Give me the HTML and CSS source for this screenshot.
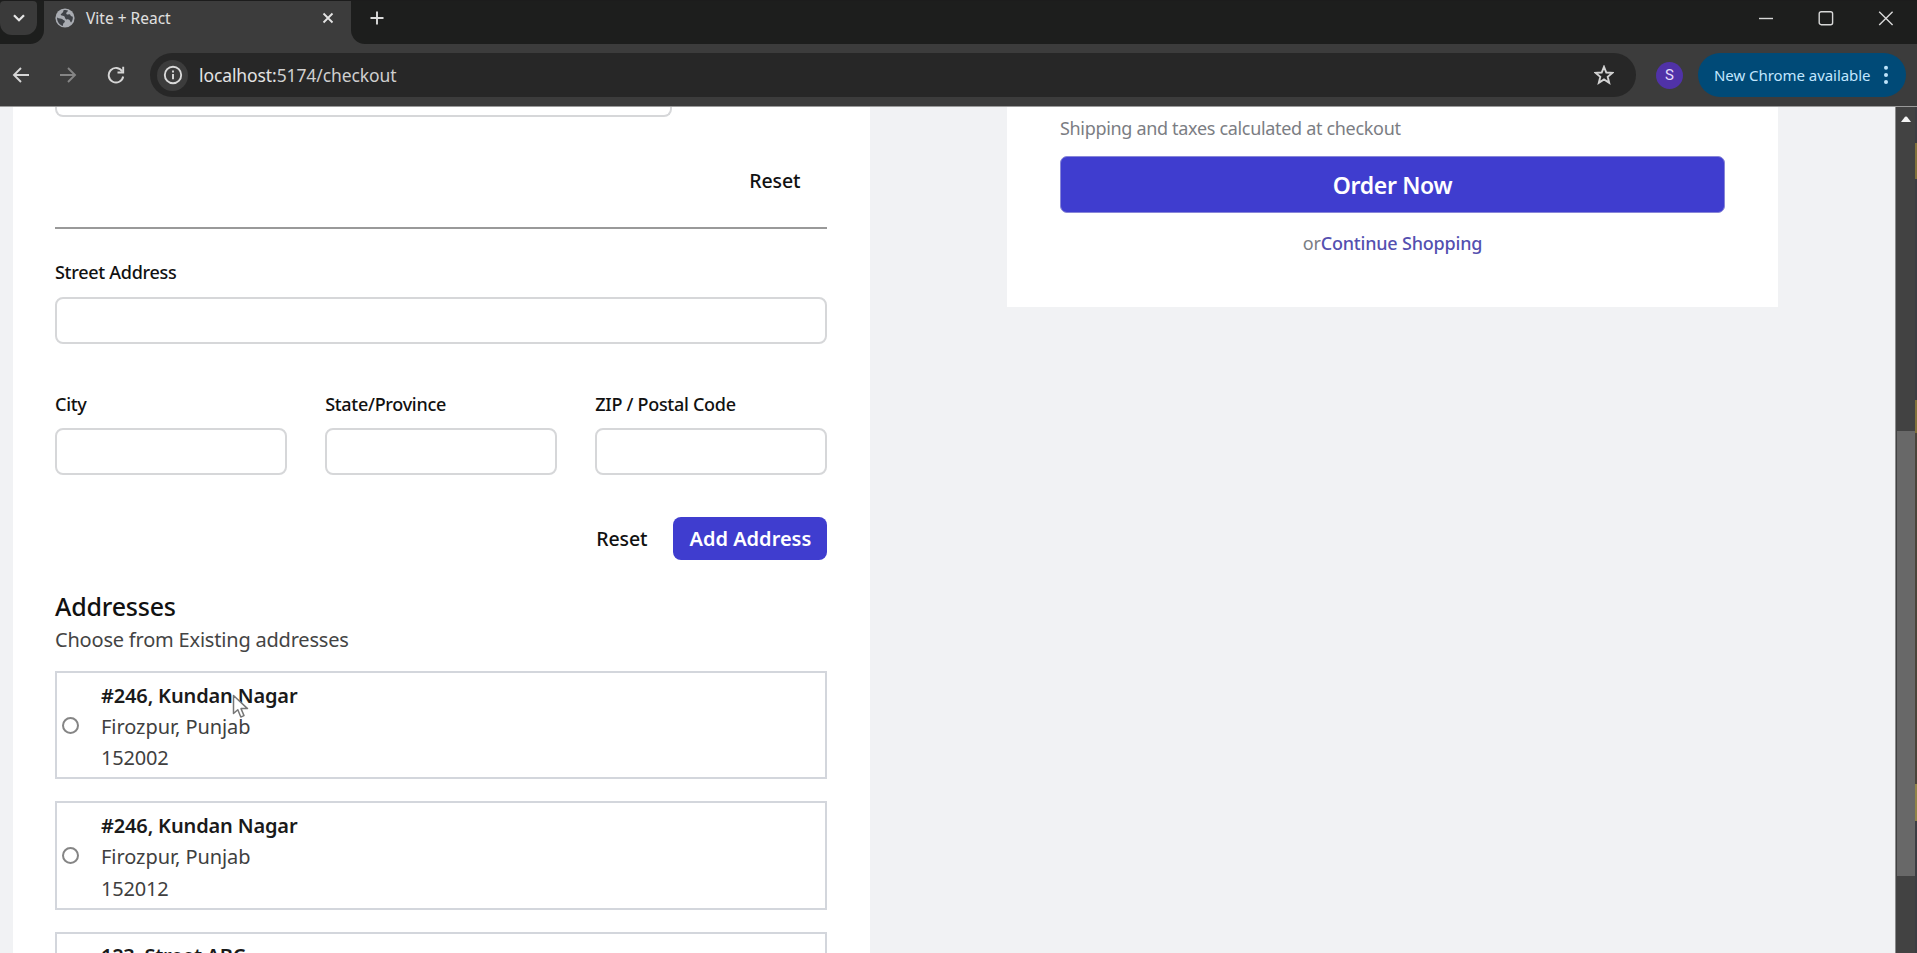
FILE: index.html
```html
<!DOCTYPE html>
<html lang="en">
<head>
<meta charset="utf-8">
<title>Vite + React</title>
<link rel="stylesheet" href="styles.css">
</head>
<body>
<div class="browser">
  <header class="tabstrip">
    <div class="tab-left"><span class="tab-search"><svg width="14" height="10" viewBox="0 0 14 10"><path d="M2 2.2 7 7.2 12 2.2" fill="none" stroke="#e6e6e6" stroke-width="2.3"/></svg></span></div>
    <div class="tab">
      <svg class="globe" width="20" height="20" viewBox="0 0 20 20"><circle cx="10" cy="10" r="9.6" fill="#a9acb2"/><path d="M2 9.5c2 1.300 4.300.5 5.500 1.800 1 1.200 2.500.9 2.400 2.300-.1 1.200-1.500 1.200-1.800 2.700l-.3 1.700C4.500 17 2 13.500 2 9.500ZM8.500 2.200c1.800-.5 3.500-.2 4.500.3-.1 1.500-1.200 1.300-1.700 2.400-.4 1 .7 1.800 1.900 1.500 1.300-.4 2-.2 2.300.8.4 1.100 1.500 1.200 2.300 1.600.3 2.200-.4 4.200-1.700 5.700-1-.5-.7-2-1.800-2.700-1.100-.6-2.600.1-3.600-.8-1-1-.7-2.600-1.900-3.100-1.200-.6-2.600.1-3-.9-.5-1.400 2.500-1.600 2.700-4.800Z" fill="#3f4247"/></svg>
      <span class="t tab-title">Vite + React</span>
      <svg class="tab-x" width="12" height="12" viewBox="0 0 12 12"><path d="M1.500 1.500 10.500 10.500M10.500 1.500 1.500 10.500" stroke="#e4e4e4" stroke-width="1.800"/></svg>
    </div>
    <div class="tab-right">
      <svg class="plus" width="14" height="14" viewBox="0 0 14 14"><path d="M7 .5V13.500M.5 7H13.500" stroke="#dcdcdc" stroke-width="1.900"/></svg>
      <div class="winbtns">
        <svg width="16" height="16" viewBox="0 0 16 16"><path d="M1 8.500H15" stroke="#d8d8d8" stroke-width="1.400"/></svg>
        <svg width="16" height="16" viewBox="0 0 16 16"><rect x="1.200" y="1.700" width="13.400" height="13" rx="2" fill="none" stroke="#d8d8d8" stroke-width="1.400"/></svg>
        <svg width="16" height="16" viewBox="0 0 16 16"><path d="M1.200 1.700 14.600 15.100M14.600 1.700 1.200 15.100" stroke="#d8d8d8" stroke-width="1.400"/></svg>
      </div>
    </div>
  </header>
  <div class="toolbar">
    <svg class="nav back" width="18" height="18" viewBox="0 0 18 18"><path d="M17 9H2.500M9 2 2 9l7 7" fill="none" stroke="#d6d6d6" stroke-width="1.900"/></svg>
    <svg class="nav fwd" width="18" height="18" viewBox="0 0 18 18"><path d="M1 9h14.500M9 2l7 7-7 7" fill="none" stroke="#858585" stroke-width="1.900"/></svg>
    <svg class="nav reload" width="18" height="18" viewBox="0 0 18 18"><path d="M15.300 5.500A7.300 7.300 0 1 0 16.200 10.500" fill="none" stroke="#d6d6d6" stroke-width="1.900"/><path d="M16.200.8V6.500H10.500" fill="none" stroke="#d6d6d6" stroke-width="1.900"/></svg>
    <div class="omnibox">
      <span class="info"><svg width="20" height="20" viewBox="0 0 20 20"><circle cx="10" cy="10" r="8.200" fill="none" stroke="#d9d9d9" stroke-width="1.900"/><path d="M10 9v5.200M10 5.600v2" stroke="#d9d9d9" stroke-width="1.900"/></svg></span>
      <span class="t url">localhost:<span class="path">5174/checkout</span></span>
      <svg class="star" width="20" height="20" viewBox="0 0 20 20"><path d="M10 1.800 12.300 7.500 18.300 7.900 13.700 11.800 15.200 17.800 10 14.500 4.800 17.800 6.300 11.800 1.700 7.900 7.700 7.500Z" fill="none" stroke="#d2d2d2" stroke-width="1.900"/></svg>
    </div>
    <span class="avatar">S</span>
    <div class="update"><span class="t update-text">New Chrome available</span><svg width="6" height="20" viewBox="0 0 6 20"><g fill="#bfe4fb"><circle cx="3" cy="2.800" r="2"/><circle cx="3" cy="10" r="2"/><circle cx="3" cy="17" r="2"/></g></svg></div>
  </div>
  <div class="viewport">
    <main class="page">
      <section class="form-card">
        <div class="input cut"></div>
        <div class="actions first"><span class="t reset">Reset</span></div>
        <hr class="rule">
        <div class="field"><label class="t label">Street Address</label><div class="input"></div></div>
        <div class="grid3">
          <div class="field"><label class="t label">City</label><div class="input"></div></div>
          <div class="field"><label class="t label">State/Province</label><div class="input"></div></div>
          <div class="field"><label class="t label">ZIP / Postal Code</label><div class="input"></div></div>
        </div>
        <div class="actions second"><span class="t reset">Reset</span><button class="add"><span class="t add-text">Add Address</span></button></div>
        <h2 class="heading">Addresses</h2>
        <p class="sub">Choose from Existing addresses</p>
        <ul class="list">
          <li class="addr"><i class="radio"></i><div class="lines"><p class="name">#246, Kundan Nagar</p><p>Firozpur, Punjab</p><p class="pin">152002</p></div></li>
          <li class="addr"><i class="radio"></i><div class="lines"><p class="name">#246, Kundan Nagar</p><p>Firozpur, Punjab</p><p class="pin">152012</p></div></li>
          <li class="addr"><i class="radio"></i><div class="lines"><p class="name street">123, Street ABC</p></div></li>
        </ul>
      </section>
      <aside class="summary">
        <p class="ship">Shipping and taxes calculated at checkout</p>
        <button class="order">Order Now</button>
        <p class="cont">or<a class="link">Continue Shopping</a></p>
      </aside>
    </main>
    <div class="scrollbar"><svg width="10" height="6" viewBox="0 0 10 6"><path d="M0 6 4 .8Q5 0 6 .8L10 6Z" fill="#f4f4f4"/></svg><div class="thumb"></div></div>
    <div class="edge"></div>
  </div>
  <svg class="cursor" width="18" height="26" viewBox="0 0 18 26"><path d="M1.500 1.500V19.500L5.800 15.800 8.800 23 12 21.600 9 14.600H15.500Z" fill="#fff" stroke="#777" stroke-width="1.500" stroke-linejoin="round"/></svg>
</div>
</body>
</html>
```
FILE: styles.css
```css
* { box-sizing: border-box; margin: 0; padding: 0; }
body { width: 1917px; height: 953px; overflow: hidden; font-family: "Noto Sans", "Open Sans", sans-serif; color: #111; background: #f1f2f4; }
svg { display: block; flex: none; }
button { border: 0; font: inherit; }
.t { white-space: nowrap; }
.browser { position: relative; display: flex; flex-direction: column; width: 1917px; height: 953px; overflow: hidden; }

.tabstrip { display: flex; height: 44px; background: #3c3c3c; flex: none; border-top: 1px solid #1c1c1c; }
.tab-left { width: 44px; background: #1d1e1d; border-bottom-right-radius: 14px; }
.tab-search { display: flex; align-items: center; justify-content: center; width: 37px; height: 34px; background: #3a3a3a; border-radius: 4px 4px 12px 12px; }
.tab { display: flex; align-items: center; width: 307px; padding: 0 17px 9px 11px; }
.tab-title { font-size: 15.500px; color: #e0e0e0; margin-left: 11px; }
.tab-x { margin-left: auto; }
.tab-right { flex: 1; display: flex; justify-content: space-between; background: #1d1e1d; border-bottom-left-radius: 14px; padding: 0 23px 9px 19px; align-items: center; }
.winbtns { display: flex; gap: 44px; }

.toolbar { display: flex; align-items: center; height: 62px; flex: none; background: #3c3c3c; padding: 0 10px 0 12px; }
.nav { flex: none; }
.fwd { margin-left: 29px; }
.reload { margin-left: 30px; }
.omnibox { display: flex; flex: none; align-items: center; width: 1486px; height: 44px; border-radius: 22px; background: #272727; margin-left: 25px; padding: 0 22px 0 7px; }
.info { display: flex; align-items: center; justify-content: center; width: 31px; height: 31px; border-radius: 50%; background: #3c3c3c; }
.url { font-size: 17.500px; letter-spacing: -.1px; color: #e3e3e3; margin-left: 11px; }
.path { color: #cfcfcf; }
.star { margin-left: auto; }
.avatar { flex: none; width: 27px; height: 27px; margin-left: 20px; border-radius: 50%; background: #5032a8; color: #e6dcfa; font: 15px/27px Roboto, sans-serif; text-align: center; }
.update { display: flex; flex: none; align-items: center; justify-content: space-between; width: 208px; height: 44px; margin-left: 15px; border-radius: 22px; background: #004a77; color: #c2e7ff; padding: 0 17px 0 16px; }
.update-text { font-size: 15px; letter-spacing: -.05px; }

.viewport { display: flex; flex: 1; min-height: 0; border-top: 1px solid #9a9a9a; }
.page { display: flex; align-items: flex-start; width: 1895px; padding-left: 13px; background: #f1f2f4; overflow: hidden; }
.form-card { width: 857px; height: 1000px; padding: 0 42.600px 0 42px; background: #fff; }
.input { height: 47px; border: 2px solid #d6d7d9; border-radius: 8px; background: #fff; }
.input.cut { width: 617px; height: 10px; border-top: 0; border-radius: 0 0 8px 8px; }
.actions { display: flex; justify-content: flex-end; align-items: center; }
.actions.first { height: 109.500px; padding: 18px 27px 0 0; }
.reset { font-size: 19.500px; font-weight: 500; letter-spacing: -.1px; }
.rule { border: 0; height: 2px; background: #999; }
.field { display: flex; flex-direction: column; gap: 9px; }
.rule + .field { margin-top: 27.500px; }
.label { font-size: 18px; line-height: 32px; font-weight: 500; letter-spacing: -.29px; }
.grid3 { display: grid; grid-template-columns: repeat(3, 1fr); gap: 38px; margin-top: 44px; }
.grid3 .field { gap: 8px; }
.actions.second { margin-top: 42px; gap: 26px; }
.add { width: 154px; height: 43px; border-radius: 8px; background: #3f3dcf; color: #fff; }
.add-text { font-size: 20px; font-weight: 600; }
.heading { margin-top: 26px; font-size: 25px; line-height: 40px; font-weight: 500; letter-spacing: -.2px; }
.sub { font-size: 20px; line-height: 28px; letter-spacing: -.2px; color: #444; }
.list { list-style: none; display: flex; flex-direction: column; gap: 22px; margin-top: 17px; }
.addr { display: flex; align-items: center; height: 108.300px; flex: none; border: 2px solid #d3d6dc; padding-left: 5px; font-size: 20px; line-height: 31.300px; letter-spacing: -.06px; color: #3f3f3f; }
.lines { height: 97px; padding-top: 3px; }
.radio { width: 17px; height: 17px; border: 2px solid #858585; border-radius: 50%; margin-right: 22px; }
.name { font-weight: 600; letter-spacing: -.15px; color: #1a1a1a; }
.pin { letter-spacing: -.2px; }
.street { letter-spacing: -.3px; }

.summary { width: 771px; height: 200px; margin-left: 137px; padding: 4px 53px 0; background: #fff; color: #7b7d83; }
.ship { font-size: 18px; line-height: 34px; letter-spacing: -.32px; }
.order { display: block; width: 665px; height: 57px; margin-top: 11px; border-radius: 7px; border: 1px solid #8886d8; background: #3f3dcf; color: #fff; font-size: 23px; font-weight: 600; letter-spacing: -.35px; }
.cont { margin-top: 14px; font-size: 18px; line-height: 32px; text-align: center; letter-spacing: -.2px; }
.link { color: #5450b0; font-weight: 500; }

.scrollbar { width: 20px; display: flex; flex-direction: column; align-items: center; background: #424242; border-left: 1px solid #8a8a8a; padding-top: 9px; }
.thumb { width: 18px; height: 445px; margin-top: 309px; margin-left: 1px; background: #686868; }
.edge { width: 2px; background: linear-gradient(#3c3d42 36px, #80703a 36px 72px, #3c3d42 72px 293px, #80703a 293px 326px, #4a443a 326px 677px, #8f8348 677px 714px, #3c3d42 714px); }
.cursor { position: absolute; left: 232px; top: 694px; }
```
